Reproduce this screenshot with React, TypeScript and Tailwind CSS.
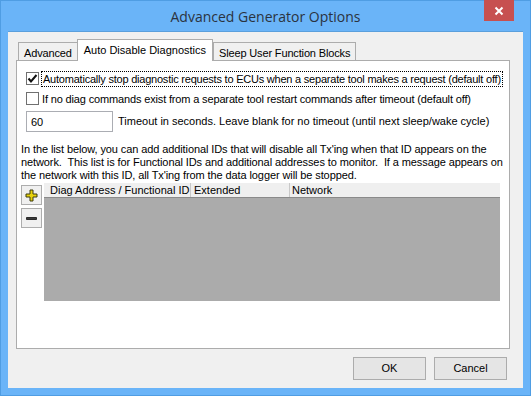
import { useState } from "react"

const ui = { fontFamily: '"Liberation Sans", Arial, sans-serif' }

function Tab({ label, active }: { label: string; active?: boolean }) {
    if (active) {
        return (
            <div className="relative z-10 -mb-px h-[22px] px-[6px] pt-[3px] bg-white border border-b-0 border-[#acacac] text-[11px] text-black leading-[14px] whitespace-nowrap">
                {label}
            </div>
        )
    }
    return (
        <div className="h-[18px] mt-[3px] px-[5px] pt-[3px] bg-[#f0f0f0] border border-b-0 border-[#acacac] text-[11px] text-black leading-[14px] whitespace-nowrap tracking-[-0.15px] first:-mr-px">
            {label}
        </div>
    )
}

function CheckBox({ checked, onClick }: { checked: boolean; onClick: () => void }) {
    return (
        <span onClick={onClick} className="w-[13px] h-[13px] shrink-0 bg-white border border-[#707070] flex items-center justify-center">
            {checked && (
                <svg width="11" height="11" viewBox="0 0 11 11">
                    <path d="M1.5 5.5 L4 8.5 L9.5 2" fill="none" stroke="#111" strokeWidth="2" />
                </svg>
            )}
        </span>
    )
}

function SmallButton({ children }: { children: React.ReactNode }) {
    return (
        <button type="button" className="w-[21px] h-[20px] flex items-center justify-center bg-[#f0f0f0] border border-[#adadad]">
            {children}
        </button>
    )
}

export default function App() {
    const [autoStop, setAutoStop] = useState(true)
    const [restart, setRestart] = useState(false)

    return (
        <div className="w-[531px] h-[396px] bg-[#6ab4f8] border border-[#4f9de3] flex flex-col" style={ui}>

            {/* title bar */}
            <div className="relative h-[30px] flex items-center justify-center">
                <span className="text-[14px] text-[#2a3340]" style={{ fontFamily: '"Open Sans", "Liberation Sans", sans-serif' }}>
                    Advanced Generator Options
                </span>
                <button type="button" className="absolute -top-px right-[16px] w-[30px] h-[21px] bg-[#c75050] flex items-center justify-center">
                    <svg width="10" height="10" viewBox="0 0 10 10">
                        <path d="M1.5 1.5 L8.5 8.5 M8.5 1.5 L1.5 8.5" stroke="white" strokeWidth="2" />
                    </svg>
                </button>
            </div>

            {/* client */}
            <div className="mx-[7px] h-[357px] bg-[#f0f0f0] border-t border-[#5a9fdc] flex flex-col pt-[7px] px-[8px]">

                <div className="flex items-end pl-[2px]">
                    <Tab label="Advanced" />
                    <Tab label="Auto Disable Diagnostics" active />
                    <Tab label="Sleep User Function Blocks" />
                </div>

                <div className="w-[494px] h-[289px] bg-white border border-[#acacac] flex flex-col pl-[4px] pt-[9px] text-[11px] text-black">

                    <div className="flex items-center h-[17px] pl-[5px] gap-[2px] whitespace-nowrap">
                        <CheckBox checked={autoStop} onClick={() => setAutoStop(!autoStop)} />
                        <span className="px-px border border-dotted border-black leading-[14px] tracking-[-0.22px]">
                            Automatically stop diagnostic requests to ECUs when a separate tool makes a request (default off)
                        </span>
                    </div>

                    <div className="flex items-center h-[17px] mt-[3px] pl-[5px] gap-[3px] whitespace-nowrap">
                        <CheckBox checked={restart} onClick={() => setRestart(!restart)} />
                        <span className="leading-[14px] tracking-[-0.15px]">
                            If no diag commands exist from a separate tool restart commands after timeout (default off)
                        </span>
                    </div>

                    <div className="flex items-center mt-[4px] pl-[5px] gap-[5px] whitespace-nowrap">
                        <input defaultValue="60" className="w-[87px] h-[21px] border border-[#abadb3] px-[4px] text-[11px] outline-none" />
                        <span>Timeout in seconds. Leave blank for no timeout (until next sleep/wake cycle)</span>
                    </div>

                    <p className="mt-[11px] leading-[13px] whitespace-nowrap tracking-[-0.1px]">
                        In the list below, you can add additional IDs that will disable all Tx'ing when that ID appears on the<br />
                        network.&nbsp; This list is for Functional IDs and additional addresses to monitor.&nbsp; If a message appears on<br />
                        the network with this ID, all Tx'ing from the data logger will be stopped.
                    </p>

                    <div className="flex mt-[1px] gap-[2px]">
                        <div className="flex flex-col gap-[3px] pt-[2px]">
                            <SmallButton>
                                <svg width="13" height="13" viewBox="0 0 13 13">
                                    <path d="M5 1 H8 V5 H12 V8 H8 V12 H5 V8 H1 V5 H5 Z" fill="#e8d20a" stroke="#3a3a10" strokeWidth="1" />
                                </svg>
                            </SmallButton>
                            <SmallButton>
                                <svg width="13" height="13" viewBox="0 0 13 13">
                                    <path d="M1.5 5.5 H11.5 V7.5 H1.5 Z" fill="#3a3a3a" stroke="#2a2a2a" strokeWidth="1" />
                                </svg>
                            </SmallButton>
                        </div>

                        <div className="w-[456px] h-[118px] bg-[#ababab] flex flex-col">
                            <div className="h-[15px] flex bg-[#efefef] border-b border-[#8a8a8a] text-[11px] leading-[14px] text-black whitespace-nowrap">
                                <div className="w-[147px] pl-[6px] border-r border-[#c8c8c8]">Diag Address / Functional ID</div>
                                <div className="w-[99px] pl-[3px] border-r border-[#c8c8c8]">Extended</div>
                                <div className="flex-1 pl-[2px]">Network</div>
                            </div>
                        </div>
                    </div>
                </div>

                <div className="flex justify-end gap-[8px] mt-[8px] pr-[8px]">
                    <button type="button" className="w-[73px] h-[23px] bg-[#e5e5e5] border border-[#acacac] text-[11px] text-black">OK</button>
                    <button type="button" className="w-[73px] h-[23px] bg-[#e5e5e5] border border-[#acacac] text-[11px] text-black">Cancel</button>
                </div>
            </div>
        </div>
    )
}
